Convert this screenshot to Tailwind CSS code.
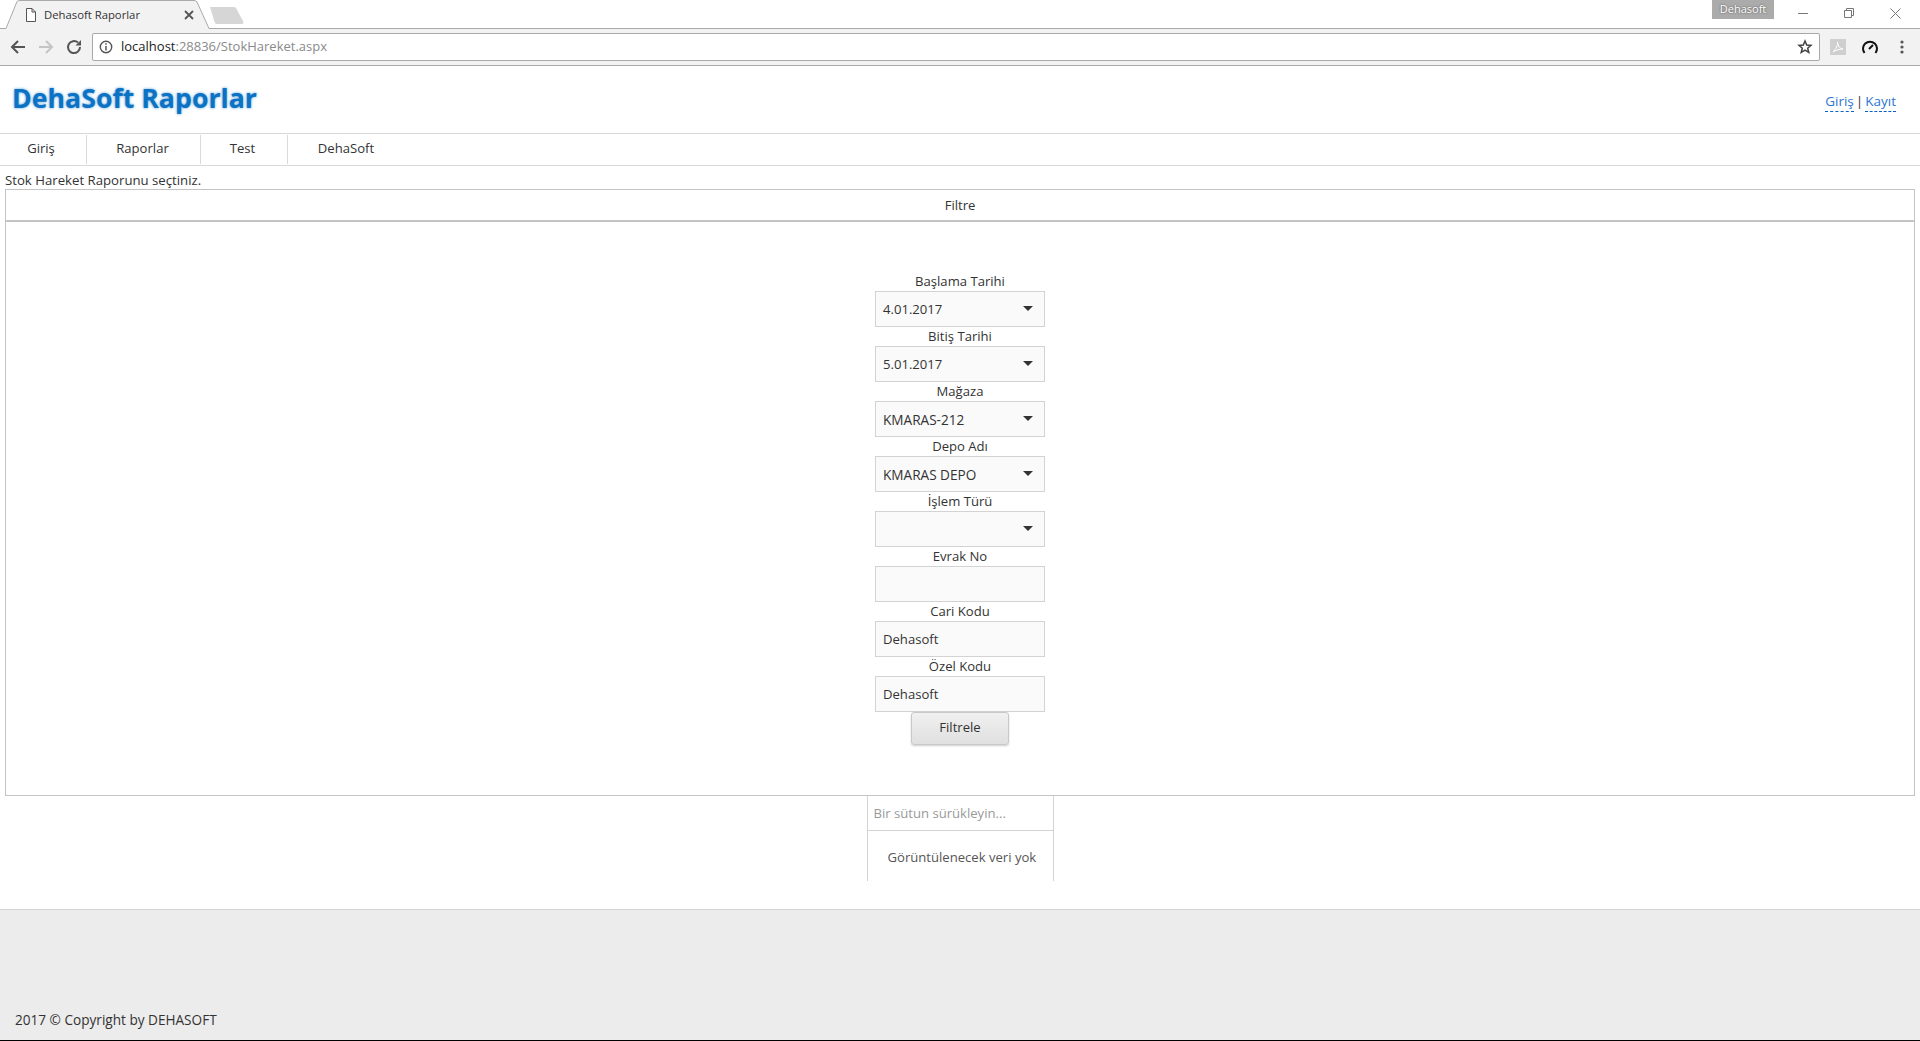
<!DOCTYPE html>
<html lang="en">
<head>
  <meta charset="UTF-8">
  <title>Dehasoft Raporlar</title>
  <script src="https://cdn.jsdelivr.net/npm/@tailwindcss/browser@4"></script>
</head>
<body class="h-[1041px] overflow-hidden bg-white text-[13.1px] text-[#333] font-['Open_Sans','Noto_Sans',sans-serif] flex flex-col">

  <!-- browser tab strip -->
  <div class="h-[29px] shrink-0 relative flex items-start border-b border-[#a9a9a9] bg-white">
    <div class="relative w-[212px] h-[29px] z-10">
      <svg class="absolute inset-0" width="212" height="29" viewBox="0 0 212 29" fill="none">
        <path d="M0 28.5 H6 L17 1.5 Q18 0.5 20 0.5 H194 Q196 0.5 197 2 L209 28.5 H212 V29 H0 Z" fill="#f2f2f2"/>
        <path d="M0 28.5 H6 L17 1.5 Q18 0.5 20 0.5 H194 Q196 0.5 197 2 L209 28.5 H212" stroke="#a9a9a9"/>
        <path d="M26.5 8.5 H32 L35.5 12 V21.5 H26.5 Z M32 8.5 V12 H35.5" stroke="#555" fill="#fff"/>
        <path d="M185 11 L193 19 M193 11 L185 19" stroke="#555" stroke-width="1.8"/>
      </svg>
      <span class="absolute left-[44px] top-[5px] text-[11.3px] leading-[20px] text-[#333]">Dehasoft Raporlar</span>
    </div>
    <svg class="mt-[6px] -ml-[3px]" width="36" height="19" viewBox="0 0 36 19"><path d="M1 1 H25 Q26 1 27 2 L34 15 Q35 18 33 18 H8 Q6 18 5.500 16 Z" fill="#d6d6d6"/></svg>
    <div class="ml-auto flex items-start h-[28px] pr-[2px]">
      <div class="w-[62px] h-[19px] bg-[#ababab] text-white text-[11px] leading-[18px] text-center [text-shadow:0_0_2px_#444]">Dehasoft</div>
      <div class="w-[46px] h-[28px] ml-[6px] flex items-center justify-center -mt-[1px]"><svg width="10" height="10"><path d="M0 5.500 H10" stroke="#777"/></svg></div>
      <div class="w-[46px] h-[28px] flex items-center justify-center -mt-[1px]"><svg width="10" height="10"><path d="M0.500 2.500 H7.500 V9.500 H0.500 Z M2.500 2.500 V0.500 H9.500 V7.500 H7.500" stroke="#777" fill="none"/></svg></div>
      <div class="w-[46px] h-[28px] flex items-center justify-center -mt-[1px]"><svg width="11" height="11"><path d="M0.500 0.500 L10.500 10.500 M10.500 0.500 L0.500 10.500" stroke="#777" fill="none"/></svg></div>
    </div>
  </div>

  <!-- browser toolbar -->
  <div class="h-[37px] shrink-0 flex items-center bg-[#f2f2f2] border-b border-[#a9a9a9] pb-[1px]">
    <div class="w-[92px] flex items-center shrink-0 pl-[9px] gap-[10px]">
      <svg width="18" height="18" viewBox="0 0 18 18" fill="none" stroke="#555" stroke-width="2"><path d="M16 9 H3 M9 3 L3 9 L9 15"/></svg>
      <svg width="18" height="18" viewBox="0 0 18 18" fill="none" stroke="#c4c4c4" stroke-width="2"><path d="M2 9 H15 M9 3 L15 9 L9 15"/></svg>
      <svg width="18" height="18" viewBox="0 0 18 18" fill="none"><path d="M15 9 A6 6 0 1 1 13 4.600" stroke="#555" stroke-width="2"/><path d="M10.500 7.500 H16 V2 Z" fill="#555"/></svg>
    </div>
    <div class="flex-1 h-[28px] flex items-center bg-white border border-[#a9a9a9] rounded-[2px] pl-[6px] pr-[6px] text-[13px]">
      <svg width="14" height="14" viewBox="0 0 14 14" fill="none"><circle cx="7" cy="7" r="5.700" stroke="#555" stroke-width="1.400"/><path d="M7 6 V10.500 M7 3.200 V4.800" stroke="#555" stroke-width="1.500"/></svg>
      <span class="ml-[8px] text-[#222]">localhost<span class="text-[#8a8a8a]">:28836/StokHareket.aspx</span></span>
      <svg class="ml-auto" width="16" height="16" viewBox="0 0 16 16" fill="none"><path d="M8 2 L9.700 6 L14 6.400 L10.700 9.200 L11.800 13.500 L8 11.200 L4.200 13.500 L5.300 9.200 L2 6.400 L6.300 6 Z" stroke="#444" stroke-width="1.500"/></svg>
    </div>
    <div class="w-[100px] shrink-0 flex items-center pl-[10px]">
      <div class="w-[16px] h-[16px] bg-[#cfcfcf] flex items-center justify-center"><svg width="12" height="12" viewBox="0 0 12 12" fill="none"><path d="M1 11 C4 8 6 4 5.500 1 C6 5 8 8 11 8 C8 8 4 9 1 11 Z" stroke="#fff"/></svg></div>
      <svg class="ml-[15px]" width="18" height="16" viewBox="0 0 18 16" fill="none"><path d="M3.500 14 A7 7 0 1 1 14.500 14" stroke="#111" stroke-width="2"/><path d="M8 10 L12 6" stroke="#111" stroke-width="2"/></svg>
      <svg class="ml-[21px]" width="4" height="14" viewBox="0 0 4 14" fill="#555"><circle cx="2" cy="2" r="1.600"/><circle cx="2" cy="7" r="1.600"/><circle cx="2" cy="12" r="1.600"/></svg>
    </div>
  </div>

  <!-- site header -->
  <header class="h-[68px] shrink-0 flex items-center justify-between pl-[12px] pr-[24px] border-b border-[#d9d9d9]">
    <h1 class="text-[26.7px] leading-[34px] font-bold text-[#0b72c4] [text-shadow:0_0_3px_#5c9fd6] -mt-[3px]">DehaSoft Raporlar</h1>
    <div class="flex gap-[2px] mt-[4px] text-[13.5px]">
      <a class="text-[#2d76d2] border-b border-dashed border-[#0b62c4]">Giriş</a><span>|</span><a class="text-[#2d76d2] border-b border-dashed border-[#0b62c4]">Kayıt</a>
    </div>
  </header>

  <!-- menu -->
  <nav class="h-[32px] shrink-0 flex items-center border-b border-[#d9d9d9]">
    <a class="w-[87px] h-[29px] pb-[1px] pr-[4px] flex items-center justify-center border-r border-[#d9d9d9]">Giriş</a>
    <a class="w-[114px] h-[29px] pb-[1px] pr-[2px] flex items-center justify-center border-r border-[#d9d9d9]">Raporlar</a>
    <a class="w-[87px] h-[29px] pb-[1px] pr-[3px] flex items-center justify-center border-r border-[#d9d9d9]">Test</a>
    <a class="w-[116px] h-[29px] pb-[1px] flex items-center justify-center">DehaSoft</a>
  </nav>

  <main class="flex-1 flex flex-col">
    <p class="h-[23px] pl-[5px] pt-[3px] leading-[23px] text-[13.2px]">Stok Hareket Raporunu seçtiniz.</p>

    <!-- filter panel -->
    <section class="mx-[5px] h-[607px] border border-[#c4c4c4] flex flex-col">
      <div class="h-[32px] shrink-0 pt-[2px] border-b-2 border-[#c4c4c4] flex items-center justify-center">Filtre</div>
      <div class="flex flex-col items-center pt-[50px]">
        <label class="h-[19px] leading-[19px]">Başlama Tarihi</label>
        <div class="w-[170px] h-[36px] border border-[#d3d3d3] bg-[#fafafa] flex items-center justify-between pl-[7px] pr-[11px]"><span class="pt-[2px]">4.01.2017</span><i class="w-0 h-0 -mt-[2px] border-x-[5px] border-x-transparent border-t-[5px] border-t-[#333]"></i></div>
        <label class="h-[19px] leading-[19px]">Bitiş Tarihi</label>
        <div class="w-[170px] h-[36px] border border-[#d3d3d3] bg-[#fafafa] flex items-center justify-between pl-[7px] pr-[11px]"><span class="pt-[2px]">5.01.2017</span><i class="w-0 h-0 -mt-[2px] border-x-[5px] border-x-transparent border-t-[5px] border-t-[#333]"></i></div>
        <label class="h-[19px] leading-[19px]">Mağaza</label>
        <div class="w-[170px] h-[36px] border border-[#d3d3d3] bg-[#fafafa] flex items-center justify-between pl-[7px] pr-[11px]"><span class="pt-[2px] text-[13.6px]">KMARAS-212</span><i class="w-0 h-0 -mt-[2px] border-x-[5px] border-x-transparent border-t-[5px] border-t-[#333]"></i></div>
        <label class="h-[19px] leading-[19px]">Depo Adı</label>
        <div class="w-[170px] h-[36px] border border-[#d3d3d3] bg-[#fafafa] flex items-center justify-between pl-[7px] pr-[11px]"><span class="pt-[2px] text-[13.6px]">KMARAS DEPO</span><i class="w-0 h-0 -mt-[2px] border-x-[5px] border-x-transparent border-t-[5px] border-t-[#333]"></i></div>
        <label class="h-[19px] leading-[19px]">İşlem Türü</label>
        <div class="w-[170px] h-[36px] border border-[#d3d3d3] bg-[#fafafa] flex items-center justify-between pl-[7px] pr-[11px]"><span></span><i class="w-0 h-0 -mt-[2px] border-x-[5px] border-x-transparent border-t-[5px] border-t-[#333]"></i></div>
        <label class="h-[19px] leading-[19px]">Evrak No</label>
        <div class="w-[170px] h-[36px] border border-[#d3d3d3] bg-[#fafafa] flex items-center pl-[7px]"></div>
        <label class="h-[19px] leading-[19px]">Cari Kodu</label>
        <div class="w-[170px] h-[36px] border border-[#d3d3d3] bg-[#fafafa] flex items-center pl-[7px] pt-[2px]">Dehasoft</div>
        <label class="h-[19px] leading-[19px]">Özel Kodu</label>
        <div class="w-[170px] h-[36px] border border-[#d3d3d3] bg-[#fafafa] flex items-center pl-[7px] pt-[2px]">Dehasoft</div>
        <button class="w-[98px] h-[33px] pb-[1px] border border-[#c9c9c9] rounded-[3px] bg-gradient-to-b from-[#f0f0f0] to-[#e0e0e0] shadow-[0_1px_2px_rgba(0,0,0,0.2)]">Filtrele</button>
      </div>
    </section>

    <!-- empty grid -->
    <div class="mx-auto w-[187px] h-[85px] border-x border-[#d3d3d3]">
      <div class="h-[35px] border-b border-[#d3d3d3] pl-[6px] pt-[2px] flex items-center text-[#999]">Bir sütun sürükleyin...</div>
      <div class="pl-[20px] pt-[16px] leading-[20px] text-[#555] whitespace-nowrap">Görüntülenecek veri yok</div>
    </div>

    <!-- footer -->
    <footer class="mt-[28px] flex-1 bg-[#ececec] border-t border-[#d3d3d3] border-b border-b-black pl-[15px] flex items-end pb-[10px] text-[13.6px]">
      2017 © Copyright by DEHASOFT
    </footer>
  </main>
</body>
</html>
